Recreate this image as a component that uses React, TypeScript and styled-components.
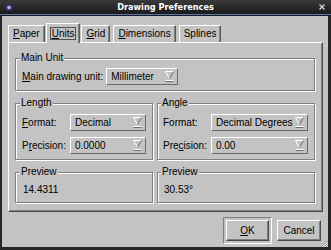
import React from "react";
import styled, { createGlobalStyle } from "styled-components";

const Global = createGlobalStyle`
  html, body { margin: 0; padding: 0; background: #262626; }
  body { font-family: "Liberation Sans", Arial, Helvetica, sans-serif; font-size: 10px; color: #000; }
  * { box-sizing: border-box; }
`;

const GRAY = "#c3c3c3";
const DARK = "#808080";

const Frame = styled.div`
  width: 331px;
  height: 250px;
  background: #262626;
  display: flex;
  flex-direction: column;
  overflow: hidden;
`;

const TitleBar = styled.div`
  height: 15px;
  flex: none;
  display: grid;
  grid-template-columns: 20px 1fr 20px;
  align-items: center;
  background: linear-gradient(#3a3a3a, #1e1e1e 85%);
  border-bottom: 1px solid #4f78b4;
  box-shadow: 0 1px 0 #1a1a1a;
`;

const TitleText = styled.div`
  text-align: center;
  color: #ffffff;
  font-family: "DejaVu Sans", sans-serif;
  font-weight: bold;
  font-size: 8.2px;
  line-height: 12px;
`;

const IconCell = styled.div<{ $end?: boolean }>`
  display: flex;
  align-items: center;
  justify-content: ${(p) => (p.$end ? "flex-end" : "flex-start")};
  padding: ${(p) => (p.$end ? "0 6px 0 0" : "0 0 0 5px")};
  height: 14px;
`;

const Body = styled.div`
  flex: 1;
  margin: 1px 3px 3px 2px;
  background: ${GRAY};
  display: flex;
  flex-direction: column;
  padding: 7px 5px 0 6px;
  position: relative;
`;

const TabRow = styled.div`
  display: flex;
  align-items: flex-end;
  height: 19px;
  gap: 3px;
  position: relative;
  z-index: 1;
`;

const Tab = styled.div<{ $active?: boolean }>`
  height: ${(p) => (p.$active ? "20px" : "17px")};
  margin: ${(p) => (p.$active ? "0 -2px -1px -2px" : "0")};
  padding: ${(p) => (p.$active ? "0 3px 1px" : "0 4px")};
  display: flex;
  align-items: center;
  justify-content: center;
  background: ${GRAY};
  border-top: 1px solid #ffffff;
  border-left: 1px solid #ffffff;
  border-right: 1px solid #5a5a5a;
  box-shadow: inset -1px 0 0 ${DARK};
  line-height: 12px;
`;

const Focus = styled.span`
  border: 1px solid #505050;
  padding: 0 1px;
  line-height: 11px;
`;

const Pane = styled.div`
  height: 170px;
  border-top: 1px solid #ffffff;
  border-left: 1px solid #ffffff;
  border-right: 1px solid #4a4a4a;
  border-bottom: 1px solid #4a4a4a;
  box-shadow: inset -1px -1px 0 ${DARK};
  padding: 9px 7px 0 6px;
  display: flex;
  flex-direction: column;
  gap: 6px;
`;

const Group = styled.fieldset<{ $padTop?: number; $padBottom?: number; $padLeft?: number }>`
  margin: 0;
  min-width: 0;
  border: 1px solid ${DARK};
  box-shadow: inset 1px 1px 0 #ffffff, 1px 1px 0 #ffffff;
  padding: ${(p) => p.$padTop ?? 4}px 6px ${(p) => p.$padBottom ?? 5}px ${(p) => p.$padLeft ?? 6}px;
`;

const Legend = styled.legend`
  padding: 0 1px;
  margin-left: -2px;
  line-height: 12px;
  background: ${GRAY};
`;

const TwoCols = styled.div`
  display: grid;
  grid-template-columns: 138px 158px;
  gap: 4px;
`;

const Row = styled.div`
  display: flex;
  align-items: center;
  gap: 3px;
  line-height: 12px;
`;

const FormGrid = styled.div`
  display: grid;
  grid-template-columns: max-content 1fr;
  column-gap: 4px;
  row-gap: 6px;
  align-items: center;
  line-height: 12px;
`;

const Combo = styled.div<{ $w?: number }>`
  height: 17px;
  width: ${(p) => (p.$w ? `${p.$w}px` : "auto")};
  display: flex;
  align-items: center;
  justify-content: space-between;
  padding: 0 3px 0 4px;
  background: ${GRAY};
  border-top: 1px solid #ffffff;
  border-left: 1px solid #ffffff;
  border-right: 1px solid #6a6a6a;
  border-bottom: 1px solid #6a6a6a;
  white-space: nowrap;
`;

const PreviewText = styled.div`
  line-height: 12px;
  padding-left: 1px;
`;

const Buttons = styled.div`
  display: flex;
  justify-content: flex-end;
  align-items: center;
  gap: 5px;
  padding: 5px 2px 0 0;
`;

const DefaultFrame = styled.div`
  border-top: 1px solid ${DARK};
  border-left: 1px solid ${DARK};
  border-right: 1px solid #ffffff;
  border-bottom: 1px solid #ffffff;
  padding: 2px;
`;

const Button = styled.div<{ $w: number }>`
  width: ${(p) => p.$w}px;
  height: 21px;
  display: flex;
  align-items: center;
  justify-content: center;
  border-top: 1px solid #ffffff;
  border-left: 1px solid #ffffff;
  border-right: 1px solid #4a4a4a;
  border-bottom: 1px solid #4a4a4a;
  box-shadow: inset -1px -1px 0 ${DARK};
  line-height: 12px;
`;

const Grip = styled.svg`
  position: absolute;
  right: 0;
  bottom: 0;
`;

const Arrow = () => (
  <svg width="9" height="11" viewBox="0 0 9 11">
    <polyline points="4.5,7.5 0.5,0.5 8.5,0.5" fill="none" stroke="#ffffff" />
    <polyline points="8.5,0.5 4.5,7.5" fill="none" stroke="#6a6a6a" />
    <line x1="0.5" y1="9.5" x2="8.5" y2="9.5" stroke="#ffffff" />
    <line x1="0.5" y1="10.5" x2="8.5" y2="10.5" stroke="#6a6a6a" />
  </svg>
);

const Select = ({ value, w }: { value: string; w?: number }) => (
  <Combo $w={w}>
    <span>{value}</span>
    <Arrow />
  </Combo>
);

export default function App() {
  return (
    <Frame>
      <Global />
      <TitleBar>
        <IconCell>
          <svg width="8" height="9" viewBox="0 0 8 9">
            <circle cx="4" cy="4.5" r="3.6" fill="#3a2f7a" />
            <circle cx="4" cy="4.5" r="1.8" fill="#b9b3e0" />
          </svg>
        </IconCell>
        <TitleText>Drawing Preferences</TitleText>
        <IconCell $end>
          <svg width="6" height="6" viewBox="0 0 6 6">
            <path d="M0.5 0.5 L5.5 5.5 M5.5 0.5 L0.5 5.5" stroke="#d8d8d8" strokeWidth="1.3" />
          </svg>
        </IconCell>
      </TitleBar>
      <Body>
        <TabRow>
          <Tab>
            <span><u>P</u>aper</span>
          </Tab>
          <Tab $active>
            <Focus><u>U</u>nits</Focus>
          </Tab>
          <Tab>
            <span><u>G</u>rid</span>
          </Tab>
          <Tab>
            <span><u>D</u>imensions</span>
          </Tab>
          <Tab>
            <span>Splines</span>
          </Tab>
        </TabRow>
        <Pane>
          <Group>
            <Legend>Main Unit</Legend>
            <Row>
              <span><u>M</u>ain drawing unit:</span>
              <Select value="Millimeter" w={72} />
            </Row>
          </Group>
          <TwoCols>
            <Group $padTop={5}>
              <Legend>Length</Legend>
              <FormGrid>
                <span><u>F</u>ormat:</span>
                <Select value="Decimal" />
                <span>P<u>r</u>ecision:</span>
                <Select value="0.0000" />
              </FormGrid>
            </Group>
            <Group $padTop={5} $padLeft={5}>
              <Legend>Angle</Legend>
              <FormGrid>
                <span>Format:</span>
                <Select value="Decimal Degrees" />
                <span>Pre<u>c</u>ision:</span>
                <Select value="0.00" />
              </FormGrid>
            </Group>
          </TwoCols>
          <TwoCols>
            <Group $padTop={6} $padBottom={6}>
              <Legend>Preview</Legend>
              <PreviewText>14.4311</PreviewText>
            </Group>
            <Group $padTop={6} $padBottom={6} $padLeft={5}>
              <Legend>Preview</Legend>
              <PreviewText>30.53°</PreviewText>
            </Group>
          </TwoCols>
        </Pane>
        <Buttons>
          <DefaultFrame>
            <Button $w={43}>
              <span><u>O</u>K</span>
            </Button>
          </DefaultFrame>
          <Button $w={44}>Cancel</Button>
        </Buttons>
        <Grip width="7" height="7" viewBox="0 0 7 7">
          <path d="M6.5 1 L1 6.5 M6.5 3.5 L3.5 6.5 M6.5 5.5 L5.5 6.5" stroke="#808080" />
          <path d="M6.5 2 L2 6.5 M6.5 4.5 L4.5 6.5" stroke="#ffffff" />
        </Grip>
      </Body>
    </Frame>
  );
}
